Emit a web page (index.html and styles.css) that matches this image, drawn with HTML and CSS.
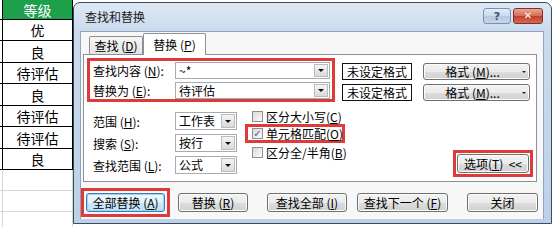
FILE: index.html
```html
<!DOCTYPE html>
<html lang="zh-CN">
<head>
<meta charset="utf-8">
<title>查找和替换</title>
<link rel="stylesheet" href="styles.css">
</head>
<body>
<div class="screen">
  <div class="sheet">
    <div class="cell head"><div class="in">等级</div></div>
    <div class="cell r21"><div class="in">优</div></div>
    <div class="cell r22"><div class="in">良</div></div>
    <div class="cell r21"><div class="in">待评估</div></div>
    <div class="cell r22"><div class="in">良</div></div>
    <div class="cell r21"><div class="in">待评估</div></div>
    <div class="cell r22"><div class="in">待评估</div></div>
    <div class="cell r21"><div class="in">良</div></div>
    <div class="cell r21 empty"><div class="in"></div></div>
    <div class="cell r21 empty"><div class="in"></div></div>
    <div class="cell r21 empty"><div class="in"></div></div>
  </div>

  <div class="dlg">
    <div class="titlebar">
      <span class="title">查找和替换</span>
      <div class="caps">
        <span class="cap help">?</span>
        <span class="cap close">✕</span>
      </div>
    </div>
    <div class="client">
      <div class="tabs">
        <div class="tab">查找 (<u>D</u>)</div>
        <div class="tab active">替换 (<u>P</u>)</div>
      </div>
      <div class="panel">
        <div class="toprow">
          <div class="hl findbox">
            <span class="lbl">查找内容 (<u>N</u>):</span>
            <div class="combo"><span class="val">~*</span><span class="dd"><i></i></span></div>
            <span class="lbl">替换为 (<u>E</u>):</span>
            <div class="combo"><span class="val">待评估</span><span class="dd"><i></i></span></div>
          </div>
          <div class="fmtcol">
            <div class="nofmt">未设定格式</div>
            <div class="nofmt">未设定格式</div>
          </div>
          <div class="fmtcol btns">
            <div class="btn fmtbtn"><span>格式 (<u>M</u>)...</span><i class="mini"></i></div>
            <div class="btn fmtbtn"><span>格式 (<u>M</u>)...</span><i class="mini"></i></div>
          </div>
        </div>
        <div class="lowrow">
          <div class="opts">
            <span class="lbl">范围 (<u>H</u>):</span>
            <div class="sel"><span class="val">工作表</span><span class="dd"><i></i></span></div>
            <span class="lbl">搜索 (<u>S</u>):</span>
            <div class="sel"><span class="val">按行</span><span class="dd"><i></i></span></div>
            <span class="lbl">查找范围 (<u>L</u>):</span>
            <div class="sel"><span class="val">公式</span><span class="dd"><i></i></span></div>
          </div>
          <div class="checks">
            <div class="chk"><span class="box"></span>区分大小写(<u>C</u>)</div>
            <div class="chk hl cellhl"><span class="box on">✓</span>单元格匹配(<u>O</u>)</div>
            <div class="chk"><span class="box"></span>区分全/半角(<u>B</u>)</div>
          </div>
          <div class="hl opthl">
            <div class="btn optbtn">选项(<u>T</u>)&nbsp; &lt;&lt;</div>
          </div>
        </div>
      </div>
      <div class="btnrow">
        <div class="hl allhl"><div class="btn focus w79">全部替换 (<u>A</u>)</div></div>
        <div class="btn w70 ml8">替换 (<u>R</u>)</div>
        <div class="btn w80 ml19">查找全部 (<u>I</u>)</div>
        <div class="btn w91 ml10">查找下一个 (<u>F</u>)</div>
        <div class="btn w71 ml19">关闭</div>
      </div>
    </div>
  </div>
</div>
</body>
</html>
```

FILE: styles.css
```css
* { box-sizing: border-box; margin: 0; padding: 0; }
body {
  width: 554px; height: 227px; overflow: hidden; background: #fff;
  font-family: "Noto Sans CJK SC", "Noto Sans", sans-serif;
  font-size: 12px; color: #000;
}
u { text-decoration: underline; }
.screen { display: flex; align-items: flex-start; }

/* spreadsheet column */
.sheet { width: 73px; flex: none; }
.cell { display: flex; padding-left: 2px; border-bottom: 1px solid #000; font-size: 14px; line-height: 1; }
.cell .in {
  flex: 1; display: flex; align-items: center; justify-content: center;
  border-left: 1px solid #000; border-right: 1px solid #000;
}
.cell.head { height: 20px; }
.cell.head .in { background: #1e9f4c; color: #fff; }
.r21 { height: 21px; }
.r22 { height: 22px; }
.cell.empty { border-bottom-color: #d6d6d6; }
.cell.empty .in { border-left-color: #d6d6d6; border-right-color: #d6d6d6; }

/* dialog window */
.dlg {
  flex: none; width: 479px; height: 222px; margin-top: 2px;
  border: 1px solid #3b4b5e; border-radius: 7px 7px 0 0;
  background: linear-gradient(#dde8f4, #cbdbee 28px, #bcd0e8);
  display: flex; flex-direction: column;
}
.titlebar { height: 28px; flex: none; display: flex; align-items: flex-start; justify-content: space-between; padding: 0 8px 0 11px; }
.title { line-height: 28px; font-size: 12px; color: #1a1a1a; }
.caps { display: flex; gap: 2px; margin-top: 5px; }
.cap {
  height: 16px; display: flex; align-items: center; justify-content: center;
  border-radius: 3px; font-size: 11px; font-weight: bold; line-height: 1;
}
.help {
  width: 28px; color: #3a4f70; border: 1px solid #7990ae;
  background: linear-gradient(#e4edf7, #c9d8ea 50%, #b6c9e0 51%, #c5d6ea);
  font-family: "DejaVu Sans", sans-serif;
}
.close {
  width: 30px; color: #fff; border: 1px solid #8b2b22;
  background: linear-gradient(#e9a897, #d46a55 50%, #c0402a 51%, #d26a52);
  font-family: "DejaVu Sans", sans-serif; font-size: 10px;
}
.client {
  margin: 0 7px 0 6px; height: 188px; flex: none;
  background: #f7f7f7; border: 1px solid #8fa4bf; border-bottom: none;
}

/* tabs */
.tabs { display: flex; align-items: flex-end; height: 22px; padding: 1px 0 0 8px; }
.tab {
  height: 18px; width: 54px; border: 1px solid #8d9097; border-bottom: none;
  background: linear-gradient(#f6f6f6, #e4e4e4);
  display: flex; align-items: center; justify-content: center; border-radius: 2px 2px 0 0;
  white-space: nowrap;
}
.tab.active {
  width: 63px; height: 22px; margin-bottom: -1px; background: #fff;
  position: relative; z-index: 1;
}
.panel {
  margin-left: 2px; width: 454px; height: 128px;
  border: 1px solid #8d9097; background: #fff;
  padding: 3px; display: flex; flex-direction: column;
}

/* highlight boxes */
.hl { border: 3px solid #e0393a; }

.toprow { display: flex; align-items: flex-start; }
.findbox {
  display: grid; grid-template-columns: 82px 155px; row-gap: 3px; align-items: center;
  padding: 1px 2px 0 3px;
}
.lbl { white-space: nowrap; line-height: 17px; }
.combo, .sel {
  height: 17px; display: flex; align-items: stretch;
  border: 1px solid #a4abb5; background: #fff;
}
.val { flex: 1; padding-left: 3px; line-height: 15px; white-space: nowrap; }
.dd {
  width: 14px; margin: 1px; border: 1px solid #bcbcbc;
  background: linear-gradient(#f5f5f5, #dadada);
  display: flex; align-items: center; justify-content: center;
}
.dd i {
  width: 0; height: 0; border-left: 3px solid transparent; border-right: 3px solid transparent;
  border-top: 3px solid #111;
}
.fmtcol { display: flex; flex-direction: column; gap: 4px; padding-top: 5px; margin-left: 7px; }
.fmtcol.btns { margin-left: 11px; }
.nofmt {
  width: 70px; height: 17px; border: 1px solid #111; background: #fff;
  display: flex; align-items: center; justify-content: center; line-height: 1;
}
.btn {
  height: 19px; border: 1px solid #707070; border-radius: 3px;
  background: linear-gradient(#f3f3f3, #ebebeb 50%, #dddddd 51%, #d0d0d0);
  box-shadow: inset 0 0 0 1px #fbfbfb;
  display: flex; align-items: center; justify-content: center; white-space: nowrap; line-height: 1;
}
.fmtbtn { width: 107px; height: 17px; position: relative; padding-right: 8px; }
.mini {
  position: absolute; right: 3px; top: 7px; width: 0; height: 0;
  border-left: 2px solid transparent; border-right: 2px solid transparent; border-top: 2px solid #222;
}

.lowrow { flex: 1; display: flex; align-items: flex-start; }
.opts {
  display: grid; grid-template-columns: 82px 62px; row-gap: 4px; align-items: center;
  margin: 10px 0 0 6px;
}
.sel { height: 18px; }
.checks { display: flex; flex-direction: column; margin: 5px 0 0 8px; width: 100px; }
.chk { height: 18px; display: flex; align-items: center; padding-left: 7px; white-space: nowrap; }
.chk.cellhl { height: 19px; margin-top: -1px; padding-left: 4px; }
.box {
  width: 11px; height: 11px; margin-right: 3px; flex: none;
  border: 1px solid #8e8f8f; background: linear-gradient(135deg, #d9d9d9, #fbfbfb);
  display: flex; align-items: center; justify-content: center;
  font-size: 10px; color: #3a58a6; font-weight: bold; line-height: 1;
  font-family: "DejaVu Sans", sans-serif;
}
.opthl { margin-left: auto; align-self: flex-end; margin-bottom: 1px; padding: 1px; width: 80px; }
.optbtn { width: 72px; }

/* bottom buttons */
.btnrow { display: flex; align-items: center; margin-top: 6px; }
.allhl { padding: 2px; width: 89px; }
.btn.focus {
  border-color: #3c7fb1;
  background: linear-gradient(#eef7fd, #e2f1fb 50%, #cfe8f9 51%, #bfe0f7);
  box-shadow: inset 0 0 0 1px #9fd6f7;
}
.w79 { width: 79px; }
.w70 { width: 70px; }
.w80 { width: 80px; }
.w91 { width: 91px; }
.w71 { width: 71px; }
.ml8 { margin-left: 8px; }
.ml10 { margin-left: 10px; }
.ml19 { margin-left: 19px; }
```
